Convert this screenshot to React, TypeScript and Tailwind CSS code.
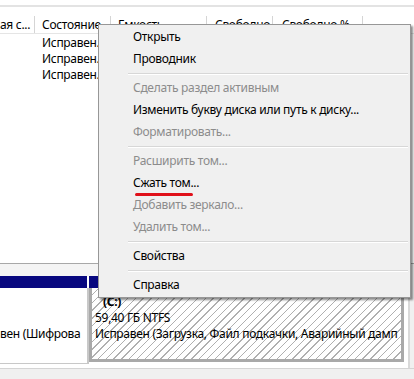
import React from "react";

type Item = { label: string; disabled?: boolean; mark?: boolean } | "sep";

const menuItems: Item[] = [
    { label: "Открыть" },
    { label: "Проводник" },
    "sep",
    { label: "Сделать раздел активным", disabled: true },
    { label: "Изменить букву диска или путь к диску..." },
    { label: "Форматировать...", disabled: true },
    "sep",
    { label: "Расширить том...", disabled: true },
    { label: "Сжать том...", mark: true },
    { label: "Добавить зеркало...", disabled: true },
    { label: "Удалить том...", disabled: true },
    "sep",
    { label: "Свойства" },
    "sep",
    { label: "Справка" },
];

const columns = [
    { title: "ая с...", w: "w-[35px]", pl: "pl-0" },
    { title: "Состояние", w: "w-[76px]", pl: "pl-[7px]" },
    { title: "Емкость", w: "w-[96px]", pl: "pl-[7px]" },
    { title: "Свободно", w: "w-[66px]", pl: "pl-[8px]" },
    { title: "Свободно %", w: "w-[90px]", pl: "pl-[9px]" },
];

const ContextMenu: React.FC = () => {
    return (
        <div className="absolute left-[98px] top-[24px] w-[313px] border border-[#979797] bg-[#f0f0f0] py-px shadow-[2px_2px_2px_rgba(0,0,0,0.45)]">
            {menuItems.map((item, i) =>
                item === "sep" ? (
                    <div key={i} className="flex h-[7px] items-center">
                        <div className="ml-[29px] mr-[2px] h-[2px] w-full border-t border-b border-t-[#d7d7d7] border-b-white" />
                    </div>
                ) : (
                    <div
                        key={i}
                        className={
                            item.disabled
                                ? "flex h-[22px] items-center pl-[34px] text-[#8c8c8c]"
                                : "flex h-[22px] items-center pl-[34px] text-black"
                        }
                    >
                        <span className="relative whitespace-nowrap">
                            {item.label}
                            {item.mark && (
                                <span className="absolute left-[2px] top-[18px] h-[3px] w-[58px] rounded-full bg-[#e0101a] blur-[0.3px]" />
                            )}
                        </span>
                    </div>
                )
            )}
        </div>
    );
};

export default function App() {
    return (
        <div
            className="relative h-[379px] w-[414px] overflow-hidden bg-white text-[12px] leading-[16px] tracking-[-0.3px] text-black"
            style={{ fontFamily: '"Noto Sans", "Open Sans", sans-serif' }}
        >
            {/* volume list */}
            <div className="h-[263px] bg-white">
                <div className="h-[5px]" />
                <div className="h-[2px] bg-[#e3e3e3]" />
                <div className="h-[9px]" />
                <div className="flex h-[18px] items-center border-b border-[#e5e5e5]">
                    {columns.map((c) => (
                        <div
                            key={c.title}
                            className={`${c.w} ${c.pl} flex h-full shrink-0 items-center overflow-hidden whitespace-nowrap border-r border-[#d5d5d5]`}
                        >
                            {c.title}
                        </div>
                    ))}
                </div>
                <div className="mt-px flex flex-col pl-[42px]">
                    <div className="h-[16px]">Исправен.</div>
                    <div className="h-[16px]">Исправен.</div>
                    <div className="h-[16px]">Исправен.</div>
                </div>
            </div>

            {/* disk map */}
            <div className="h-px bg-[#a8a8a8]" />
            <div className="flex h-[104px]">
                <div className="flex w-[405px] flex-col bg-white">
                    <div className="h-[12px] bg-[#f4f4f4]" />
                    <div className="flex">
                        <div className="flex w-[89px] flex-col">
                            <div className="mr-[2px] h-[12px] bg-[#08087f]" />
                            <div className="h-[76px] overflow-hidden border-r-2 border-b border-[#c8c8c8] bg-white">
                                <div className="h-[6px]" />
                                <div className="h-[16px]" />
                                <div className="h-[16px]" />
                                <div className="h-[16px] whitespace-nowrap">вен (Шифрова</div>
                            </div>
                        </div>
                        <div className="flex w-[315px] flex-col">
                            <div className="h-[12px] bg-[#08087f]" />
                            <div className="h-[74px] overflow-hidden border-[3px] border-t-0 border-[#a9a9a9] bg-[repeating-linear-gradient(135deg,#ffffff_0px,#ffffff_4.5px,#b0b0b0_4.5px,#b0b0b0_5.5px)]">
                                <div className="pt-[6px] pl-[3px]">
                                    <div className="pl-[8px] font-bold">(C:)</div>
                                    <div>59,40 ГБ NTFS</div>
                                    <div className="whitespace-nowrap">Исправен (Загрузка, Файл подкачки, Аварийный дамп</div>
                                </div>
                            </div>
                        </div>
                    </div>
                </div>
                <div className="w-[5px] border-r-2 border-[#d9d9d9] bg-white" />
                <div className="flex-1 bg-[#f0f0f0]" />
            </div>
            <div className="h-px bg-[#d4d4d4]" />
            <div className="h-[11px] bg-[#f0f0f0]" />

            <ContextMenu />
        </div>
    );
}
